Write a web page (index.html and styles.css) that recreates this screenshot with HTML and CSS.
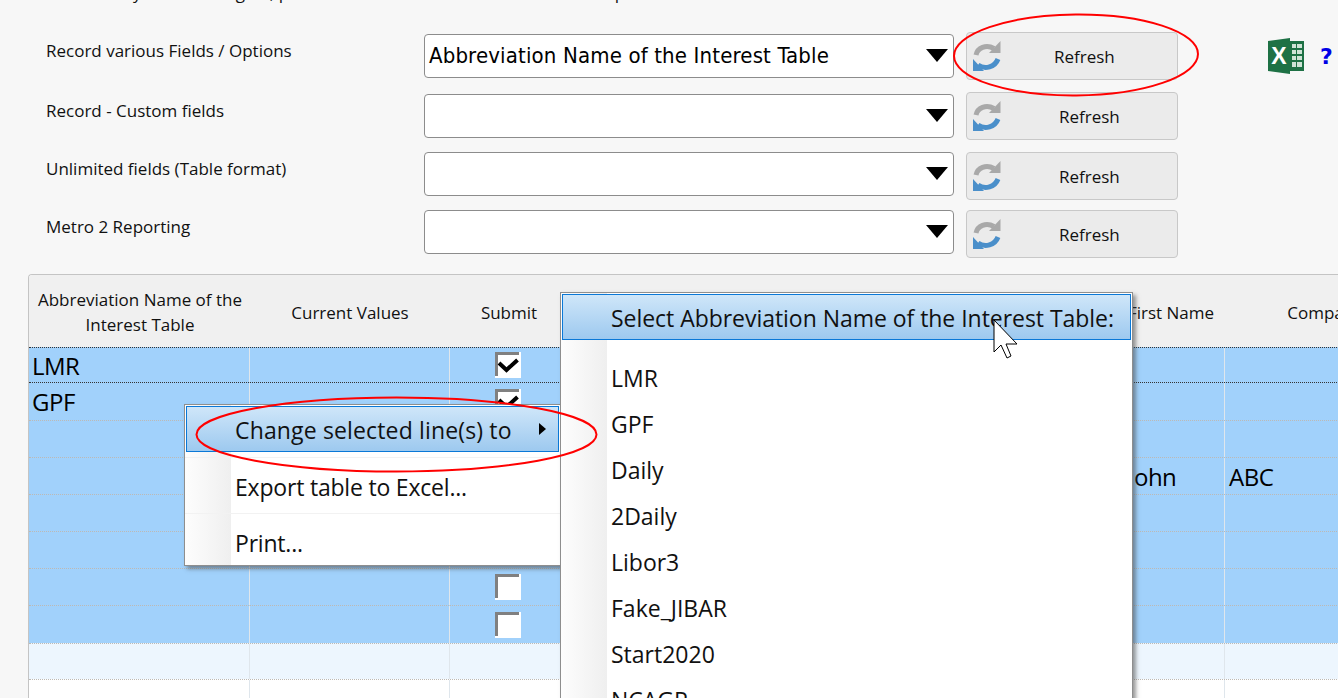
FILE: index.html
```html
<!DOCTYPE html>
<html lang="en">
<head>
<meta charset="utf-8">
<title>Record fields</title>
<link rel="stylesheet" href="styles.css">
</head>
<body>
<svg width="0" height="0" class="defs">
  <symbol id="sync" viewBox="0 0 28 31">
    <path d="M3 14C4.500 7 13 3 21 7.500" fill="none" stroke="#a9a9a9" stroke-width="5"/>
    <path d="M27.500 0v12H16z" fill="#a9a9a9"/>
    <path d="M25 18C22 26 12 29 5 24" fill="none" stroke="#4a8fca" stroke-width="5"/>
    <path d="M0 18v12h11z" fill="#4a8fca"/>
  </symbol>
  <symbol id="tick" viewBox="0 0 26 26">
    <path d="M3 1.500H24M1.500 0V24" fill="none" stroke="#808080" stroke-width="3"/>
    <path d="M4 11l7.500 7L22.500 8" fill="none" stroke="#000" stroke-width="4"/>
  </symbol>
  <symbol id="box" viewBox="0 0 26 26">
    <path d="M3 1.500H24M1.500 0V24" fill="none" stroke="#808080" stroke-width="3"/>
  </symbol>
</svg>

<div class="intro"><p>Now modify all of the region, please click on the selected item then hit update</p></div>

<section class="form">
  <div class="row">
    <label class="row-label">Record various Fields / Options</label>
    <div class="combo">Abbreviation Name of the Interest Table<span class="combo-arrow"></span></div>
    <button class="refresh refresh-first"><svg class="sync"><use href="#sync"/></svg><span>Refresh</span></button>
    <div class="tools">
      <svg class="excel" viewBox="0 0 36 36">
        <path d="M0 3 22 0V36L0 33Z" fill="#1e7145"/>
        <rect x="22" y="3" width="14" height="30" fill="#1e7145"/>
        <path d="M24 6h4v4h-4zM29 6h5v4h-5zM24 12h4v4h-4zM29 12h5v4h-5zM24 18h4v4h-4zM29 18h5v4h-5zM24 24h4v5h-4zM29 24h5v5h-5z" fill="#cfe3d6"/>
        <text x="11" y="26" class="excel-x">X</text>
      </svg>
      <span class="help">?</span>
    </div>
  </div>
  <div class="row">
    <label class="row-label">Record - Custom fields</label>
    <div class="combo"><span class="combo-arrow"></span></div>
    <button class="refresh"><svg class="sync"><use href="#sync"/></svg><span>Refresh</span></button>
  </div>
  <div class="row row-flush row-tight">
    <label class="row-label">Unlimited fields (Table format)</label>
    <div class="combo"><span class="combo-arrow"></span></div>
    <button class="refresh"><svg class="sync"><use href="#sync"/></svg><span>Refresh</span></button>
  </div>
  <div class="row row-flush">
    <label class="row-label">Metro 2 Reporting</label>
    <div class="combo"><span class="combo-arrow"></span></div>
    <button class="refresh"><svg class="sync"><use href="#sync"/></svg><span>Refresh</span></button>
  </div>
</section>

<section class="table">
  <div class="thead">
    <div class="th">Abbreviation Name of the<br>Interest Table</div>
    <div class="th">Current Values</div>
    <div class="th">Submit</div>
    <div class="th"></div>
    <div class="th">First Name</div>
    <div class="th">Company</div>
  </div>
  <div class="tbody">
    <div class="tr sel focus"><div class="td">LMR</div><div class="td"></div><div class="td chk"><svg class="cb"><use href="#tick"/></svg></div><div class="td"></div><div class="td"></div><div class="td"></div></div>
    <div class="tr sel"><div class="td">GPF</div><div class="td"></div><div class="td chk"><svg class="cb"><use href="#tick"/></svg></div><div class="td"></div><div class="td"></div><div class="td"></div></div>
    <div class="tr sel"><div class="td"></div><div class="td"></div><div class="td chk"></div><div class="td"></div><div class="td"></div><div class="td"></div></div>
    <div class="tr sel"><div class="td"></div><div class="td"></div><div class="td chk"></div><div class="td"></div><div class="td td-name">John</div><div class="td td-company">ABC</div></div>
    <div class="tr sel"><div class="td"></div><div class="td"></div><div class="td chk"></div><div class="td"></div><div class="td"></div><div class="td"></div></div>
    <div class="tr sel"><div class="td"></div><div class="td"></div><div class="td chk"></div><div class="td"></div><div class="td"></div><div class="td"></div></div>
    <div class="tr sel"><div class="td"></div><div class="td"></div><div class="td chk"><svg class="cb"><use href="#box"/></svg></div><div class="td"></div><div class="td"></div><div class="td"></div></div>
    <div class="tr sel"><div class="td"></div><div class="td"></div><div class="td chk"><svg class="cb"><use href="#box"/></svg></div><div class="td"></div><div class="td"></div><div class="td"></div></div>
    <div class="tr alt"><div class="td"></div><div class="td"></div><div class="td"></div><div class="td"></div><div class="td"></div><div class="td"></div></div>
    <div class="tr"><div class="td"></div><div class="td"></div><div class="td"></div><div class="td"></div><div class="td"></div><div class="td"></div></div>
  </div>
</section>

<nav class="menu menu-context">
  <div class="item item-active">Change selected line(s) to<span class="sub-arrow"></span></div>
  <div class="item item-rule">Export table to Excel...</div>
  <div class="item item-rule">Print...</div>
</nav>

<nav class="menu menu-values">
  <div class="item item-active">Select Abbreviation Name of the Interest Table:</div>
  <div class="values">
    <div class="item">LMR</div>
    <div class="item">GPF</div>
    <div class="item">Daily</div>
    <div class="item">2Daily</div>
    <div class="item">Libor3</div>
    <div class="item">Fake_JIBAR</div>
    <div class="item">Start2020</div>
    <div class="item">NCAGR</div>
  </div>
</nav>

<svg class="marks" viewBox="0 0 1338 698">
  <ellipse cx="1076" cy="55" rx="122" ry="40.500" transform="rotate(-0.500 1076 55)"/>
  <ellipse cx="396.500" cy="434.500" rx="200" ry="37"/>
  <path class="pointer" d="M994 320v32l7-7 6 13 4-2-5-12h11z"/>
</svg>
</body>
</html>
```

FILE: styles.css
```css
* { box-sizing: border-box; }
html, body { margin: 0; height: 698px; overflow: hidden; }
body {
  background: #f7f7f7;
  color: #111;
  font-family: "Open Sans", "Liberation Sans", sans-serif;
  font-size: 17px;
  position: relative;
}
.defs { position: absolute; }
.intro { height: 32px; overflow: hidden; padding-left: 46px; }
.intro p { margin: -19px 0 0; line-height: 24px; white-space: nowrap; }
.form { padding-left: 46px; }
.row { display: flex; height: 48px; margin-bottom: 12px; align-items: flex-start; }
.row-tight { margin-bottom: 10px; }
.row-label { width: 378px; padding-top: 6px; line-height: 26px; }
.row-flush .row-label { padding-top: 4px; }
.combo {
  width: 530px; height: 44px; margin-top: 2px; margin-right: 12px;
  background: #fff; border: 1px solid #8c8c8c; border-radius: 4px;
  padding: 0 0 2px 4px;
  font-family: "DejaVu Sans", sans-serif; font-stretch: condensed; font-size: 22px; letter-spacing: .15px; color: #000;
  display: flex; align-items: center; white-space: nowrap;
}
.row-flush .combo { margin-top: 0; }
.combo-arrow {
  width: 0; height: 0; margin-left: auto; margin-right: 5px;
  border-left: 11px solid transparent; border-right: 11px solid transparent; border-top: 13px solid #000;
}
.refresh {
  width: 212px; height: 48px; padding: 0 0 0 6px;
  background: #ebebeb; border: 1px solid #c8c8c8; border-radius: 4px;
  font: inherit; color: #111;
  display: flex; align-items: center;
}
.refresh span { margin-left: 58px; }
.refresh-first span { margin-left: 53px; }
.sync { width: 28px; height: 31px; flex: none; }
.tools { display: flex; align-items: center; margin-left: 90px; gap: 16px; margin-top: 6px; }
.excel { width: 36px; height: 36px; }
.excel-x { font: bold 23px "Liberation Sans", sans-serif; fill: #fff; text-anchor: middle; }
.help { color: #0000e6; font: bold 22px "DejaVu Sans", sans-serif; }

.table {
  margin-left: 28px; margin-top: 16px; height: 424px;
  background: #fff; border: 1px solid #c4c4c4; border-right: 0; border-bottom: 0; border-radius: 4px 0 0 0;
  overflow: hidden;
}
.thead, .tr { display: grid; grid-template-columns: 220px 200px 118px 549px 108px 200px; padding-left: 1px; }
.thead { height: 72px; background: #f0f0f0; }
.th { display: flex; align-items: center; justify-content: center; text-align: center; line-height: 25px; padding-top: 2px; white-space: nowrap; }
.tbody { display: grid; grid-template-rows: 35px 38px 37px 37px 37px 37px 37px 38px 36px 37px; }
.tr { border-top: 1px dotted #bdb9b4; }
.tr.focus { border-top-color: #333; }
.tr.focus + .tr { border-top-color: #333; }
.sel { background: #a1d1fb; }
.alt { background: #edf6fe; }
.td { border-right: 1px solid #dfe6ec; font-size: 24px; letter-spacing: -.5px; padding-left: 2px; display: flex; align-items: center; white-space: nowrap; color: #000; }
.td-name { padding-left: 11px; }
.td-company { padding-left: 4px; }
.chk { padding-left: 45px; }
.cb { display: block; width: 26px; height: 26px; background: #fff; }

.menu {
  position: absolute; background: #fff; border: 1px solid #8e8e8e;
  box-shadow: 3px 3px 4px rgba(70, 70, 70, .55);
  font-size: 23px; color: #111;
}
.menu::before {
  content: ""; position: absolute; z-index: 0; left: 0; top: 0; bottom: 0; width: 46px;
  background: linear-gradient(90deg, #fdfdfd, #efefef);
}
.item { position: relative; height: 46px; line-height: 44px; padding-left: 50px; white-space: nowrap; }
.item-active {
  margin: 1px; padding-left: 48px; height: 46px;
  background: linear-gradient(#cfe6f9, #9dc9ef);
  border: 1px solid #0a78d7; line-height: 46px; letter-spacing: -.04px;
}
.item-rule { height: 56px; line-height: 58px; border-top: 1px solid #f2f2f2; letter-spacing: -.2px; }
.menu-context { left: 184px; top: 404px; width: 377px; height: 162px; }
.menu-context .item-active { margin-bottom: 5px; letter-spacing: .15px; }
.sub-arrow {
  position: absolute; left: 352px; top: 16px; width: 0; height: 0;
  border-top: 6px solid transparent; border-bottom: 6px solid transparent; border-left: 7px solid #000;
}
.menu-values { left: 560px; top: 292px; width: 573px; height: 420px; }
.values { position: relative; padding-top: 15px; }
.marks { position: absolute; left: 0; top: 0; width: 1338px; height: 698px; pointer-events: none; }
.marks ellipse { fill: none; stroke: #f00; stroke-width: 2; }
.marks .pointer { fill: #fff; stroke: #000; stroke-width: 1; }
```
